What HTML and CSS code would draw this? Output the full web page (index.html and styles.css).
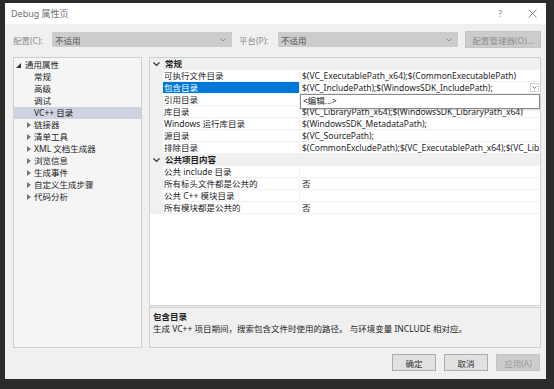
FILE: index.html
```html
<!DOCTYPE html>
<html lang="zh-CN">
<head>
  <meta charset="UTF-8" />
  <title>Debug 属性页</title>
  <link rel="stylesheet" href="styles.css">
</head>
<body>

  <div class="dialog">
    <div class="titlebar">
      <span class="title">Debug 属性页</span>
      <span class="help">?</span>
      <svg class="close" width="9" height="9" viewBox="0 0 9 9"><path d="M0.5 0.5 L8.5 8.5 M8.5 0.5 L0.5 8.5" stroke="#8a8a8a" stroke-width="1"/></svg>
    </div>

    <div class="config-row">
      <span class="label">配置(C):</span>
      <div class="combo">
        <span>不适用</span>
        <svg width="6" height="4" viewBox="0 0 6 4"><path d="M0.5 0.5 L3 3 L5.5 0.5" fill="none" stroke="#8c8c8c"/></svg>
      </div>
      <span class="label">平台(P):</span>
      <div class="combo">
        <span>不适用</span>
        <svg width="6" height="4" viewBox="0 0 6 4"><path d="M0.5 0.5 L3 3 L5.5 0.5" fill="none" stroke="#8c8c8c"/></svg>
      </div>
      <div class="btn manager">配置管理器(O)...</div>
    </div>

    <div class="main">
      <div class="tree">
        <div class="node top"><span class="arrow open"></span>通用属性</div>
        <div class="node"><span class="arrow"></span>常规</div>
        <div class="node"><span class="arrow"></span>高级</div>
        <div class="node"><span class="arrow"></span>调试</div>
        <div class="node selected"><span class="arrow"></span>VC++ 目录</div>
        <div class="node"><span class="arrow closed"></span>链接器</div>
        <div class="node"><span class="arrow closed"></span>清单工具</div>
        <div class="node"><span class="arrow closed"></span>XML 文档生成器</div>
        <div class="node"><span class="arrow closed"></span>浏览信息</div>
        <div class="node"><span class="arrow closed"></span>生成事件</div>
        <div class="node"><span class="arrow closed"></span>自定义生成步骤</div>
        <div class="node"><span class="arrow closed"></span>代码分析</div>
      </div>

      <div class="right">
        <div class="grid">
          <div class="row category">
            <span class="gutter"><svg width="7" height="5" viewBox="0 0 7 5"><path d="M0.5 0.5 L3.5 3.5 L6.5 0.5" fill="none" stroke="#333" stroke-width="1.2"/></svg></span>
            <span class="cat-name">常规</span>
          </div>
          <div class="row"><span class="gutter"></span><span class="name">可执行文件目录</span><span class="value">$(VC_ExecutablePath_x64);$(CommonExecutablePath)</span></div>
          <div class="row"><span class="gutter"></span><span class="name active">包含目录</span><span class="value">$(VC_IncludePath);$(WindowsSDK_IncludePath);<span class="drop-btn"><svg width="5" height="3" viewBox="0 0 5 3"><path d="M0.5 0.5 L2.5 2.5 L4.5 0.5" fill="none" stroke="#777"/></svg></span></span></div>
          <!-- value of this row is hidden under the open dropdown -->
          <div class="row"><span class="gutter"></span><span class="name">引用目录</span><span class="value"></span></div>
          <div class="row"><span class="gutter"></span><span class="name">库目录</span><span class="value">$(VC_LibraryPath_x64);$(WindowsSDK_LibraryPath_x64)</span></div>
          <div class="row"><span class="gutter"></span><span class="name">Windows 运行库目录</span><span class="value">$(WindowsSDK_MetadataPath);</span></div>
          <div class="row"><span class="gutter"></span><span class="name">源目录</span><span class="value">$(VC_SourcePath);</span></div>
          <div class="row"><span class="gutter"></span><span class="name">排除目录</span><span class="value">$(CommonExcludePath);$(VC_ExecutablePath_x64);$(VC_Lib</span></div>
          <div class="row category">
            <span class="gutter"><svg width="7" height="5" viewBox="0 0 7 5"><path d="M0.5 0.5 L3.5 3.5 L6.5 0.5" fill="none" stroke="#333" stroke-width="1.2"/></svg></span>
            <span class="cat-name">公共项目内容</span>
          </div>
          <div class="row"><span class="gutter"></span><span class="name">公共 include 目录</span><span class="value"></span></div>
          <div class="row"><span class="gutter"></span><span class="name">所有标头文件都是公共的</span><span class="value">否</span></div>
          <div class="row"><span class="gutter"></span><span class="name">公共 C++ 模块目录</span><span class="value"></span></div>
          <div class="row"><span class="gutter"></span><span class="name">所有模块都是公共的</span><span class="value">否</span></div>

          <div class="dropdown">&lt;编辑...&gt;</div>
        </div>

        <div class="desc">
          <div class="desc-title">包含目录</div>
          <div>生成 VC++ 项目期间，搜索包含文件时使用的路径。 与环境变量 INCLUDE 相对应。</div>
        </div>
      </div>
    </div>

    <div class="buttons">
      <div class="btn">确定</div>
      <div class="btn">取消</div>
      <div class="btn disabled">应用(A)</div>
    </div>
  </div>

</body>
</html>
```

FILE: styles.css
```css
body {
  margin: 0;
  height: 389px;
  overflow: hidden;
  background-color: #2b2b2b;
  font-family: "Noto Sans", "Noto Sans CJK SC", sans-serif;
  font-size: 8.5px;
  color: #1e1e1e;
}

.dialog {
  margin: 3px 0 0 5px;
  width: 541px;
  height: 376px;
  background-color: #f0f0f0;
  display: flex;
  flex-direction: column;
}

/* Title bar */
.titlebar {
  height: 21px;
  flex-shrink: 0;
  background-color: #fff;
  display: flex;
  align-items: center;
  padding-left: 6px;
  color: #707070;
  font-size: 9px;
}

.title {
  flex: 1;
}

.help {
  color: #8a8a8a;
  margin-right: 26px;
}

.close {
  margin-right: 9px;
}

/* Configuration row */
.config-row {
  display: flex;
  align-items: center;
  height: 17px;
  margin-top: 7px;
  padding-left: 8px;
}

.label {
  width: 39px;
  color: #8c8c8c;
}

.combo {
  width: 180px;
  height: 15px;
  box-sizing: border-box;
  background-color: #cccccc;
  color: #555;
  display: flex;
  align-items: center;
  justify-content: space-between;
  padding: 0 6px 0 3px;
  margin-right: 7px;
}

.btn {
  height: 17px;
  box-sizing: border-box;
  width: 44px;
  border: 1px solid #adadad;
  background-color: #e1e1e1;
  display: flex;
  align-items: center;
  justify-content: center;
  color: #333;
}

.btn.manager {
  width: 76px;
  background-color: #cccccc;
  border-color: #c4c4c4;
  color: #8e8e8e;
}

.btn.disabled {
  background-color: #cccccc;
  border-color: #c4c4c4;
  color: #9a9a9a;
}

/* Main area */
.main {
  display: flex;
  gap: 7px;
  height: 291px;
  margin-top: 9px;
  padding-left: 8px;
}

.tree {
  width: 129px;
  box-sizing: border-box;
  border: 1px solid #cfcfcf;
  background-color: #f5f5f5;
  padding-top: 1px;
}

.node {
  height: 12px;
  line-height: 12px;
  display: flex;
  align-items: center;
  padding-left: 13px;
  white-space: nowrap;
}

.node.top {
  padding-left: 2px;
}

.node.top .arrow {
  width: 9px;
}

.node.selected {
  background-color: #cfd3e1;
}

.arrow {
  width: 7px;
  height: 12px;
  display: flex;
  align-items: center;
}

.arrow.open::before {
  content: "";
  border-style: solid;
  border-width: 0 0 5px 5px;
  border-color: transparent transparent #333 transparent;
}

.arrow.closed::before {
  content: "";
  width: 0;
  height: 0;
  border-style: solid;
  border-width: 3px 0 3px 4px;
  border-color: transparent transparent transparent #777;
}

.right {
  width: 392px;
  display: flex;
  flex-direction: column;
  gap: 1px;
}

/* Property grid */
.grid {
  position: relative;
  height: 249px;
  box-sizing: border-box;
  border: 1px solid #cfcfcf;
  background-color: #fff;
  overflow: hidden;
}

.row {
  display: flex;
  height: 12px;
  line-height: 11px;
  white-space: nowrap;
}

.gutter {
  width: 13px;
  flex-shrink: 0;
  background-color: #f0f0f0;
  display: flex;
  align-items: center;
  justify-content: center;
}

.name {
  width: 137px;
  flex-shrink: 0;
  box-sizing: border-box;
  padding-left: 1px;
  border-right: 1px solid #f0f0f0;
  border-bottom: 1px solid #f0f0f0;
}

.name.active {
  background-color: #0078d7;
  color: #fff;
}

.value {
  flex: 1;
  position: relative;
  padding-left: 2px;
  border-bottom: 1px solid #f0f0f0;
  overflow: hidden;
}

.drop-btn {
  position: absolute;
  right: 1px;
  top: 1px;
  width: 9px;
  height: 9px;
  box-sizing: border-box;
  border: 1px solid #d4d4d4;
  display: flex;
  align-items: center;
  justify-content: center;
}

.category {
  background-color: #f0f0f0;
}

.cat-name {
  font-weight: bold;
  padding-left: 2px;
}

.dropdown {
  position: absolute;
  left: 150px;
  top: 36px;
  width: 240px;
  height: 15px;
  box-sizing: border-box;
  background-color: #fff;
  border: 1px solid #8a8a8a;
  box-shadow: 1px 1px 2px rgba(0, 0, 0, 0.2);
  padding-left: 2px;
  line-height: 12px;
}

/* Description */
.desc {
  flex: 1;
  box-sizing: border-box;
  border: 1px solid #cfcfcf;
  padding: 3px 3px;
  line-height: 12px;
}

.desc-title {
  font-weight: bold;
}

/* Bottom buttons */
.buttons {
  display: flex;
  justify-content: flex-end;
  gap: 8px;
  margin-top: 6px;
  padding-right: 6px;
}
```
